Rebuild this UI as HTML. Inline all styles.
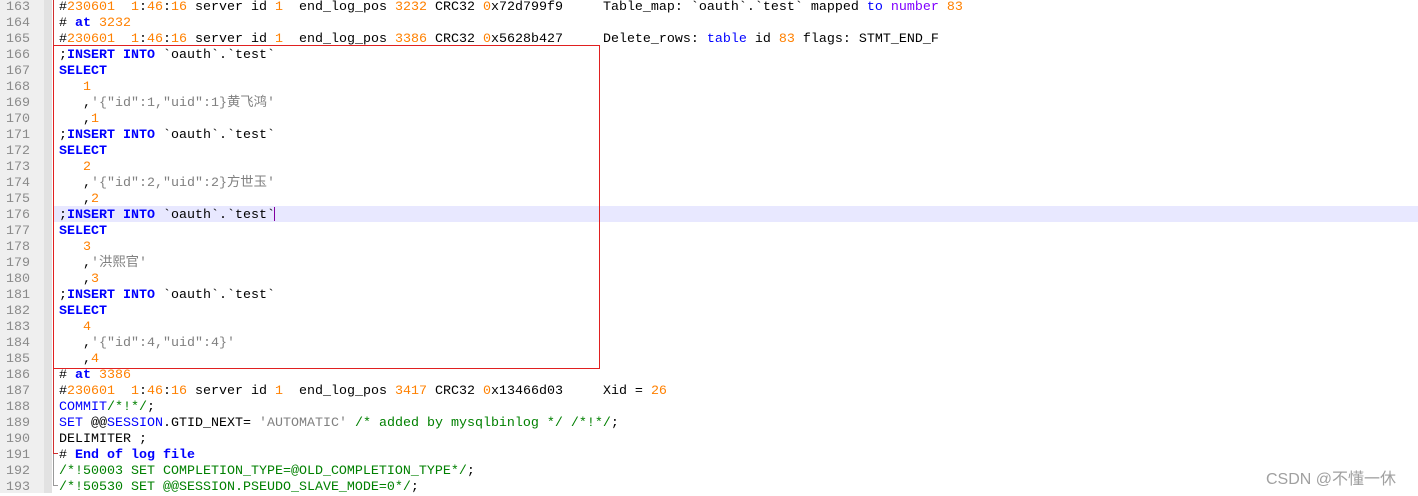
<!DOCTYPE html>
<html><head><meta charset="utf-8"><style>
body{margin:0;width:1418px;height:493px;overflow:hidden;background:#fff;position:relative;font-family:"Liberation Mono","Noto Sans CJK SC",monospace;font-size:13.33px}
.g{position:absolute;left:0;top:0;width:44px;height:493px;background:#efefef}
.f{position:absolute;left:44px;top:0;width:8px;height:493px;background:#e2e2e2}
.w{position:absolute;left:0;top:2px;width:1418px;height:493px}
.l{position:absolute;left:0;height:16px;line-height:16px;white-space:pre;width:1418px}
.n{position:absolute;left:6px;color:#8a8a8a;width:32px}
.c{position:absolute;left:59px;color:#000}
.o{color:#ff8000}.k{color:#0000ff;font-weight:bold}.s{color:#808080}.m{color:#008000}.p{color:#8000ff}.b{color:#0000ff}
.hl{position:absolute;left:53px;top:206px;width:1365px;height:16px;background:#e8e8ff}
</style></head><body>
<div class="g"></div><div class="f"></div>
<div class="hl"></div>
<div style="position:absolute;left:53px;top:0;width:1px;height:454px;background:#d03030"></div>
<div style="position:absolute;left:53px;top:453px;width:5px;height:1px;background:#d03030"></div>
<div style="position:absolute;left:53px;top:454px;width:1px;height:32px;background:#999"></div>
<div style="position:absolute;left:53px;top:485px;width:5px;height:1px;background:#999"></div>
<div style="position:absolute;left:53px;top:45px;width:545px;height:322px;border:1px solid #e02020"></div>
<div style="position:absolute;left:274px;top:207px;width:1px;height:14px;background:#8000a0"></div>
<div class="w">
<div class="l" style="top:-2px"><span class="n">163</span><span class="c">#<span class="o">230601</span>  <span class="o">1</span>:<span class="o">46</span>:<span class="o">16</span> server id <span class="o">1</span>  end_log_pos <span class="o">3232</span> CRC32 <span class="o">0</span>x72d799f9     Table_map: `oauth`.`test` mapped <span class="b">to</span> <span class="p">number</span> <span class="o">83</span></span></div>
<div class="l" style="top:14px"><span class="n">164</span><span class="c"># <span class="k">at</span> <span class="o">3232</span></span></div>
<div class="l" style="top:30px"><span class="n">165</span><span class="c">#<span class="o">230601</span>  <span class="o">1</span>:<span class="o">46</span>:<span class="o">16</span> server id <span class="o">1</span>  end_log_pos <span class="o">3386</span> CRC32 <span class="o">0</span>x5628b427     Delete_rows: <span class="b">table</span> id <span class="o">83</span> flags: STMT_END_F</span></div>
<div class="l" style="top:46px"><span class="n">166</span><span class="c">;<span class="k">INSERT INTO</span> `oauth`.`test`</span></div>
<div class="l" style="top:62px"><span class="n">167</span><span class="c"><span class="k">SELECT</span></span></div>
<div class="l" style="top:78px"><span class="n">168</span><span class="c">   <span class="o">1</span></span></div>
<div class="l" style="top:94px"><span class="n">169</span><span class="c">   ,<span class="s">'{"id":1,"uid":1}黄飞鸿'</span></span></div>
<div class="l" style="top:110px"><span class="n">170</span><span class="c">   ,<span class="o">1</span></span></div>
<div class="l" style="top:126px"><span class="n">171</span><span class="c">;<span class="k">INSERT INTO</span> `oauth`.`test`</span></div>
<div class="l" style="top:142px"><span class="n">172</span><span class="c"><span class="k">SELECT</span></span></div>
<div class="l" style="top:158px"><span class="n">173</span><span class="c">   <span class="o">2</span></span></div>
<div class="l" style="top:174px"><span class="n">174</span><span class="c">   ,<span class="s">'{"id":2,"uid":2}方世玉'</span></span></div>
<div class="l" style="top:190px"><span class="n">175</span><span class="c">   ,<span class="o">2</span></span></div>
<div class="l" style="top:206px"><span class="n">176</span><span class="c">;<span class="k">INSERT INTO</span> `oauth`.`test`</span></div>
<div class="l" style="top:222px"><span class="n">177</span><span class="c"><span class="k">SELECT</span></span></div>
<div class="l" style="top:238px"><span class="n">178</span><span class="c">   <span class="o">3</span></span></div>
<div class="l" style="top:254px"><span class="n">179</span><span class="c">   ,<span class="s">'洪熙官'</span></span></div>
<div class="l" style="top:270px"><span class="n">180</span><span class="c">   ,<span class="o">3</span></span></div>
<div class="l" style="top:286px"><span class="n">181</span><span class="c">;<span class="k">INSERT INTO</span> `oauth`.`test`</span></div>
<div class="l" style="top:302px"><span class="n">182</span><span class="c"><span class="k">SELECT</span></span></div>
<div class="l" style="top:318px"><span class="n">183</span><span class="c">   <span class="o">4</span></span></div>
<div class="l" style="top:334px"><span class="n">184</span><span class="c">   ,<span class="s">'{"id":4,"uid":4}'</span></span></div>
<div class="l" style="top:350px"><span class="n">185</span><span class="c">   ,<span class="o">4</span></span></div>
<div class="l" style="top:366px"><span class="n">186</span><span class="c"># <span class="k">at</span> <span class="o">3386</span></span></div>
<div class="l" style="top:382px"><span class="n">187</span><span class="c">#<span class="o">230601</span>  <span class="o">1</span>:<span class="o">46</span>:<span class="o">16</span> server id <span class="o">1</span>  end_log_pos <span class="o">3417</span> CRC32 <span class="o">0</span>x13466d03     Xid = <span class="o">26</span></span></div>
<div class="l" style="top:398px"><span class="n">188</span><span class="c"><span class="b">COMMIT</span><span class="m">/*!*/</span>;</span></div>
<div class="l" style="top:414px"><span class="n">189</span><span class="c"><span class="b">SET</span> @@<span class="b">SESSION</span>.GTID_NEXT= <span class="s">'AUTOMATIC'</span> <span class="m">/* added by mysqlbinlog */ /*!*/</span>;</span></div>
<div class="l" style="top:430px"><span class="n">190</span><span class="c">DELIMITER ;</span></div>
<div class="l" style="top:446px"><span class="n">191</span><span class="c"># <span class="k">End of log file</span></span></div>
<div class="l" style="top:462px"><span class="n">192</span><span class="c"><span class="m">/*!50003 SET COMPLETION_TYPE=@OLD_COMPLETION_TYPE*/</span>;</span></div>
<div class="l" style="top:478px"><span class="n">193</span><span class="c"><span class="m">/*!50530 SET @@SESSION.PSEUDO_SLAVE_MODE=0*/</span>;</span></div>
</div>
<div style="position:absolute;left:1266px;top:465px;font-family:'Liberation Sans','Noto Sans CJK SC',sans-serif;font-size:16px;color:#a0a0a0">CSDN @不懂一休</div>
</body></html>
